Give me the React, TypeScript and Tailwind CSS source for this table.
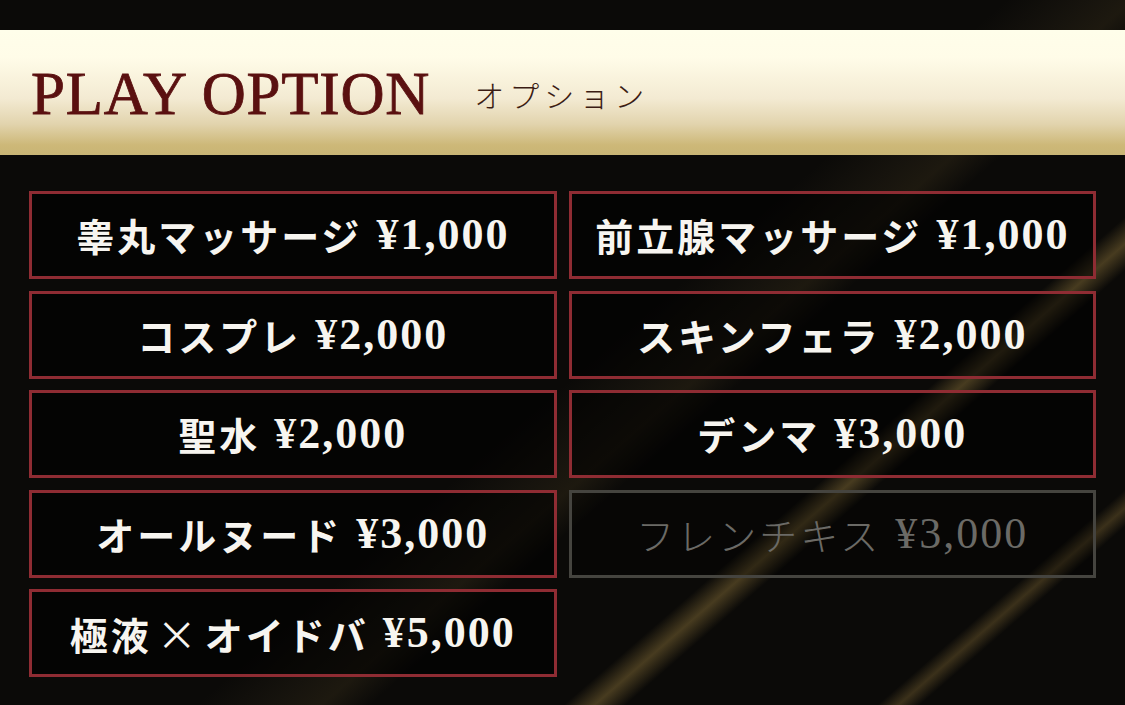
const options: { name: string; price: string; disabled?: boolean }[] = [
  { name: '睾丸マッサージ', price: '¥1,000' },
  { name: '前立腺マッサージ', price: '¥1,000' },
  { name: 'コスプレ', price: '¥2,000' },
  { name: 'スキンフェラ', price: '¥2,000' },
  { name: '聖水', price: '¥2,000' },
  { name: 'デンマ', price: '¥3,000' },
  { name: 'オールヌード', price: '¥3,000' },
  { name: 'フレンチキス', price: '¥3,000', disabled: true },
  { name: '極液×オイドバ', price: '¥5,000' },
]

function Name({ text }: { text: string }) {
  // the cross sign is full-width in the reference
  const parts = text.split('×')
  if (parts.length === 1) return <>{text}</>
  return (
    <>
      {parts[0]}
      <span className="px-[5px] text-[40px] font-normal">×</span>
      {parts[1]}
    </>
  )
}

export default function App() {
  return (
    <div className="h-[705px] w-[1125px] overflow-hidden bg-[#0b0a08] bg-[linear-gradient(139deg,transparent_52%,rgba(120,100,60,0.10)_56%,rgba(140,115,60,0.14)_58.5%,transparent_61%,transparent_71%,rgba(170,140,70,0.38)_72.6%,transparent_74.2%,transparent_87.2%,rgba(160,130,65,0.32)_88.3%,transparent_89.4%)] pt-[30px]">
      {/* header band */}
      <header className="flex h-[125px] items-center gap-[44px] bg-[linear-gradient(180deg,#fffeea_0%,#fffce8_22%,#f3ead2_55%,#e2d4ae_75%,#cdb878_92%,#c8b575_100%)] pl-[31px] pt-[2px]">
        <h1 className="font-['Liberation_Serif',serif] text-[61px] leading-none tracking-[0.8px] text-[#5a1010] [-webkit-text-stroke:0.8px_#5a1010]">
          PLAY OPTION
        </h1>
        <span className="font-['Noto_Sans_CJK_JP',sans-serif] text-[30px] font-light leading-none tracking-[5px] text-[#3b1c14]">
          オプション
        </span>
      </header>

      {/* option grid */}
      <section className="grid grid-cols-2 gap-x-[12px] gap-y-[11.5px] px-[29px] pt-[36px]">
        {options.map((o) => (
          <div
            key={o.name}
            className={
              o.disabled
                ? 'flex h-[88px] items-center justify-center gap-[14px] border-[3px] border-[#45443f] bg-black/30 text-[#6b6a66]'
                : 'flex h-[88px] items-center justify-center gap-[14px] border-[3px] border-[#8f2c33] bg-black/55 text-[#f7f5f0]'
            }
          >
            <span
              className={
                o.disabled
                  ? "font-['Noto_Sans_CJK_JP',sans-serif] text-[38px] font-light leading-none tracking-[3px]"
                  : "font-['Noto_Sans_CJK_JP',sans-serif] text-[38px] font-bold leading-none tracking-[3px]"
              }
            >
              <Name text={o.name} />
            </span>
            <span
              className={
                o.disabled
                  ? "font-['Liberation_Serif',serif] text-[44px] font-normal leading-none tracking-[2px]"
                  : "font-['Liberation_Serif',serif] text-[44px] font-bold leading-none tracking-[2px]"
              }
            >
              {o.price}
            </span>
          </div>
        ))}
      </section>
    </div>
  )
}
